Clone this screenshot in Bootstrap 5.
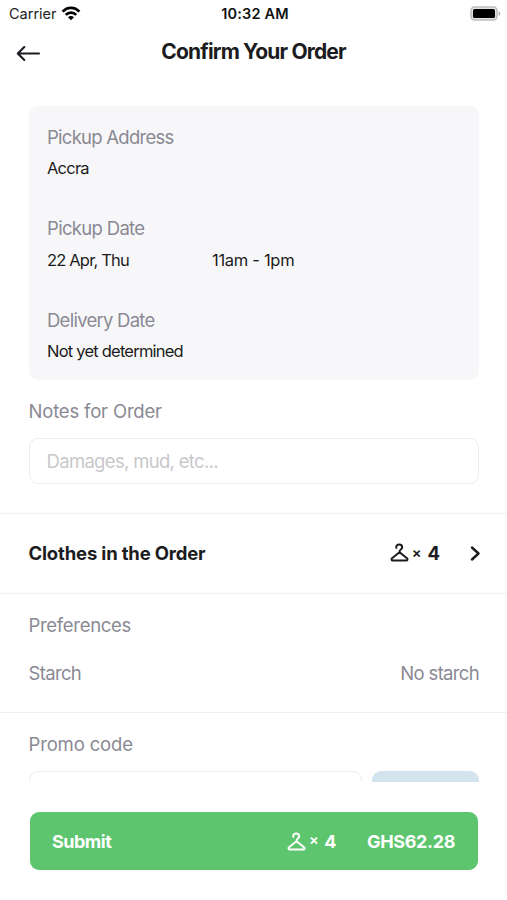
<!DOCTYPE html>
<html lang="en">
<head>
<meta charset="utf-8">
<meta name="viewport" content="width=device-width, initial-scale=1">
<title>Confirm Your Order</title>
<link href="https://cdn.jsdelivr.net/npm/bootstrap@5.3.0/dist/css/bootstrap.min.css" rel="stylesheet">
<style>
  body { font-family: Inter, "Liberation Sans", sans-serif; color: #1c1c20; }
  .screen { height: 900px; }
  .status { height: 27px; font-size: 14.5px; line-height: 27px; padding: 0 6px 0 9px; color: #222; }
  .status-time { font-weight: 600; letter-spacing: .2px; color: #111; }
  .side { flex: 1 1 0; }
  .wifi { margin-left: 4.5px; margin-top: -1px; }
  .topbar { height: 79px; padding: 10px 16px 0; }
  .topbar h1 { font-size: 21px; line-height: 28px; font-weight: 700; letter-spacing: -.84px; padding-top: 1px; }
  .topbar svg { margin-top: 7px; }
  .scroller { height: 676px; }
  .inset { padding-left: 28.5px; padding-right: 28px; }
  .details { background: #f7f7fa; border-radius: 9px; height: 274px; padding: 16px 15px 0 18.5px; }
  .caption { font-size: 18.5px; line-height: 31px; letter-spacing: -.3px; color: #8a8993; }
  .details .caption { letter-spacing: -.74px; }
  .details .caption.snug { letter-spacing: -.68px; }
  .value { font-size: 16.5px; line-height: 31px; letter-spacing: -.78px; }
  .pickup { margin-top: 29px; padding-bottom: 14px; border-bottom: 1px solid #f3f3f5; }
  .pickup .value { padding-top: 1px; margin-bottom: -1px; }
  .pickup-day { width: 165px; letter-spacing: -.82px; }
  .pickup-hours { letter-spacing: -.3px; }
  .delivery { margin-top: 15px; }
  .notes { height: 132.5px; padding-top: 16px; }
  .notes .caption { letter-spacing: -.18px; }
  .field { border: 1.5px solid #ececee; border-radius: 9px; box-shadow: none; }
  .notes .field { height: 46.5px; margin-top: 10.5px; padding: 0 17px; font-size: 18.5px; letter-spacing: -.68px; }
  .notes .field::placeholder { color: #c8c8ca; opacity: 1; }
  .block { border-top: 1px solid #f1f1f2; }
  .clothes { height: 80px; font-size: 18.5px; font-weight: 700; padding-right: 26.5px; padding-top: 1px; }
  .clothes .hanger { margin-top: -2px; margin-right: -1px; }
  .clothes-title { letter-spacing: -.17px; }
  .chev { margin-left: 29.5px; }
  .prefs { height: 119.5px; padding-top: 16px; }
  .prefs-row { margin-top: 17px; }
  .prefs-row span { letter-spacing: -.67px; }
  .promo { padding-top: 16px; }
  .promo-row { margin-top: 10.5px; gap: 10px; }
  .promo-row .field { height: 47px; }
  .promo .caption { letter-spacing: -.15px; }
  .apply { width: 107px; flex: none; height: 47px; background: #d3e4ee; border-radius: 9px; }
  .times { font-size: 14.5px; font-weight: 600; line-height: 1; margin: -1px 6px 0 3.5px; }
  .submit { margin: 30px 29.5px 0 30px; height: 58px; border-radius: 9px; color: #fff;
    font-size: 18px; font-weight: 700; letter-spacing: -.5px; padding: 0 22.5px 0 22px; border: 0;
    background: #5cc56d; }
  .submit .hanger { margin-top: 1px; }
  .total { margin-left: 31px; letter-spacing: -.36px; font-weight: 700; }
</style>
</head>
<body class="bg-white">
<svg class="d-none">
  <symbol id="hanger" viewBox="0 0 19 19">
    <path d="M6.300 4.900C5.900 2.800 7.200 1.400 9.200 1.400c1.900 0 3 1.300 3 2.800 0 1.100-.6 1.700-1.400 2.300-.9.700-1.300 1.300-1.300 2.700M9.500 9.200l7.500 6.100c.9.700.5 2.100-.6 2.100H2.600c-1.100 0-1.500-1.400-.6-2.100z" fill="none" stroke="currentColor" stroke-width="2" stroke-linecap="round" stroke-linejoin="round"/>
  </symbol>
</svg>
<div class="screen d-flex flex-column overflow-hidden">
  <div class="status d-flex align-items-center">
    <div class="side d-flex align-items-center">
      <span>Carrier</span>
      <svg class="wifi" width="20" height="15" viewBox="0 0 20 15" fill="none" stroke="#000" stroke-width="2.700">
        <path d="M1.600 5.700C6.200.6 13.800.6 18.400 5.700M4.700 8.900c3-3.100 7.600-3.100 10.600 0"/>
        <path d="M10 14.200 7 11.300c1.800-1.600 4.200-1.600 6 0z" fill="#000" stroke="none"/>
      </svg>
    </div>
    <div class="status-time">10:32 AM</div>
    <div class="side d-flex justify-content-end">
      <svg width="31" height="15" viewBox="0 0 31 15">
        <rect x="1" y="1" width="26" height="13" rx="3.500" fill="#e4e4e4" stroke="#bdbdbd" stroke-width="1.500"/>
        <rect x="3" y="3" width="22" height="9" rx="1.500" fill="#000"/>
        <path d="M28.700 5.200c1.900.7 1.900 3.900 0 4.600z" fill="#aaa"/>
      </svg>
    </div>
  </div>
  <header class="topbar d-flex align-items-start">
    <div class="side d-flex">
      <svg width="26" height="18" viewBox="0 0 26 18" fill="none" stroke="#1c1c20" stroke-width="2.100" stroke-linecap="round" stroke-linejoin="round"><path d="M23 9.500H2M8.300 3 1.800 9.500 8.300 16"/></svg>
    </div>
    <h1 class="mb-0">Confirm Your Order</h1>
    <div class="side"></div>
  </header>
  <main class="scroller overflow-hidden flex-shrink-0">
    <div class="inset">
      <section class="details">
        <div class="caption">Pickup Address</div>
        <div class="value">Accra</div>
        <div class="pickup">
          <div class="caption snug">Pickup Date</div>
          <div class="value d-flex"><span class="pickup-day">22 Apr, Thu</span><span class="pickup-hours">11am - 1pm</span></div>
        </div>
        <div class="delivery">
          <div class="caption">Delivery Date</div>
          <div class="value">Not yet determined</div>
        </div>
      </section>
      <section class="notes">
        <label class="caption d-block" for="notes">Notes for Order</label>
        <input id="notes" class="form-control field" placeholder="Damages, mud, etc...">
      </section>
    </div>
    <section class="block clothes inset d-flex align-items-center">
      <span class="clothes-title me-auto">Clothes in the Order</span>
      <svg class="hanger" width="19" height="19"><use href="#hanger"/></svg>
      <span class="times">×</span><span>4</span>
      <svg class="chev" width="11" height="16" viewBox="0 0 11 16" fill="none" stroke="#1c1c20" stroke-width="2.400" stroke-linecap="round" stroke-linejoin="round"><path d="m2 1.500 6.500 6L2 13.500"/></svg>
    </section>
    <section class="block prefs inset caption">
      <div>Preferences</div>
      <div class="prefs-row d-flex justify-content-between"><span>Starch</span><span>No starch</span></div>
    </section>
    <section class="block promo inset">
      <label class="caption d-block" for="promo">Promo code</label>
      <div class="promo-row d-flex">
        <input id="promo" class="form-control field">
        <div class="apply"></div>
      </div>
    </section>
  </main>
  <button class="submit btn d-flex align-items-center" type="button">
    <span class="me-auto">Submit</span>
    <svg class="hanger" width="19" height="19"><use href="#hanger"/></svg>
    <span class="times">×</span><span>4</span>
    <span class="total">GHS62.28</span>
  </button>
</div>
<script src="https://cdn.jsdelivr.net/npm/bootstrap@5.3.0/dist/js/bootstrap.bundle.min.js"></script>
</body>
</html>
